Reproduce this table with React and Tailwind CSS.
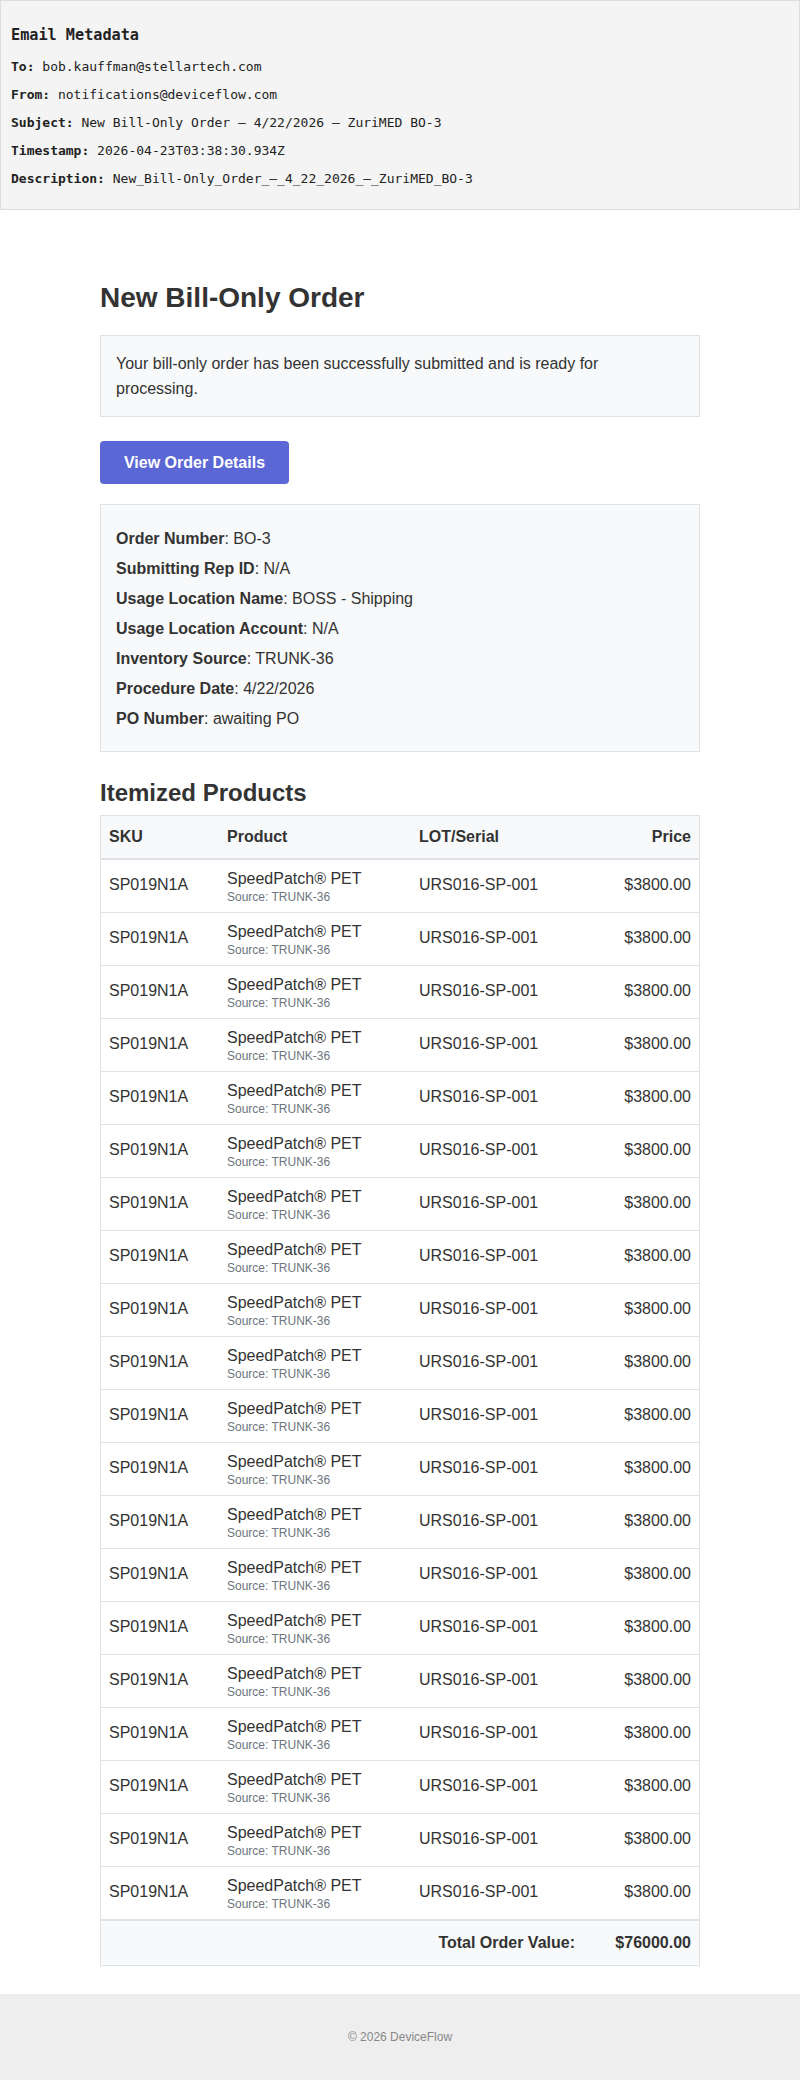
import React from "react";

const meta = [
  ["To:", "bob.kauffman@stellartech.com"],
  ["From:", "notifications@deviceflow.com"],
  ["Subject:", "New Bill-Only Order – 4/22/2026 – ZuriMED BO-3"],
  ["Timestamp:", "2026-04-23T03:38:30.934Z"],
  ["Description:", "New_Bill-Only_Order_–_4_22_2026_–_ZuriMED_BO-3"],
];

const details = [
  ["Order Number", "BO-3"],
  ["Submitting Rep ID", "N/A"],
  ["Usage Location Name", "BOSS - Shipping"],
  ["Usage Location Account", "N/A"],
  ["Inventory Source", "TRUNK-36"],
  ["Procedure Date", "4/22/2026"],
  ["PO Number", "awaiting PO"],
];

const items = Array.from({ length: 20 }, () => ({
  sku: "SP019N1A",
  name: "SpeedPatch® PET",
  source: "TRUNK-36",
  lot: "URS016-SP-001",
  price: "$3800.00",
}));

const Metadata = () => {
  return (
    <div className="border border-[#ddd] bg-[#f4f4f4] p-[10px] font-['DejaVu_Sans_Mono',monospace] text-[13px] text-[#222]">
      <h3 className="mt-[15px] mb-[15px] text-[15.2px] font-bold leading-[18px]">Email Metadata</h3>
      {meta.map(([k, v]) => (
        <p key={k} className="my-[13px] leading-[15px]">
          <strong>{k}</strong> {v}
        </p>
      ))}
    </div>
  );
};

const App = () => {
  return (
    <div className="min-h-screen bg-white font-['Liberation_Sans',Arial,sans-serif] text-[#333]">
      <Metadata />

      <div className="mx-auto w-[600px]">
        <h1 className="mt-[71px] text-[28px] font-bold leading-[34px]">New Bill-Only Order</h1>

        <div className="mt-[20px] border border-[#dee2e6] bg-[#f8f9fa] p-[15px] text-base leading-[25px]">
          Your bill-only order has been successfully submitted and is ready for processing.
        </div>

        <a className="mt-[24px] flex h-[43px] w-[189px] items-center justify-center rounded bg-[#5a67d5] text-base font-bold text-white">
          View Order Details
        </a>

        <div className="mt-[20px] flex flex-col gap-[6px] border border-[#dee2e6] bg-[#f8f9fa] px-[15px] pt-[22px] pb-[20px] text-base leading-6">
          {details.map(([k, v]) => (
            <div key={k}>
              <span className="font-bold">{k}</span>: {v}
            </div>
          ))}
        </div>

        <h2 className="mt-[26px] text-2xl font-bold leading-[29px]">Itemized Products</h2>

        <table className="mt-[8px] w-full table-fixed border-separate border-spacing-0 border border-[#dee2e6] text-base">
          <colgroup>
            <col className="w-[118px]" />
            <col className="w-[192px]" />
            <col className="w-[172px]" />
            <col className="w-[116px]" />
          </colgroup>
          <thead>
            <tr className="bg-[#f8f9fa]">
              <th className="border-b-2 border-[#dee2e6] px-2 py-2 text-left font-bold leading-[26px]">SKU</th>
              <th className="border-b-2 border-[#dee2e6] px-2 py-2 text-left font-bold leading-[26px]">Product</th>
              <th className="border-b-2 border-[#dee2e6] px-2 py-2 text-left font-bold leading-[26px]">LOT/Serial</th>
              <th className="border-b-2 border-[#dee2e6] px-2 py-2 text-right font-bold leading-[26px]">Price</th>
            </tr>
          </thead>
          <tbody>
            {items.map((it, i) => {
              const b = i === items.length - 1 ? "border-b-2" : "border-b";
              return (
                <tr key={i}>
                  <td className={`${b} border-[#dee2e6] px-2 pt-[6px] pb-[9px] align-middle`}>{it.sku}</td>
                  <td className={`${b} border-[#dee2e6] px-2 pt-[6px] pb-[9px]`}>
                    <div className="leading-[25px]">{it.name}</div>
                    <div className="text-xs leading-[12px] text-[#6c757d]">Source: {it.source}</div>
                  </td>
                  <td className={`${b} border-[#dee2e6] px-2 pt-[6px] pb-[9px] align-middle`}>{it.lot}</td>
                  <td className={`${b} border-[#dee2e6] px-2 pt-[6px] pb-[9px] text-right align-middle`}>{it.price}</td>
                </tr>
              );
            })}
            <tr className="bg-[#f8f9fa]">
              <td colSpan={3} className="px-2 py-[9px] text-right font-bold leading-[26px]">
                Total Order Value:
              </td>
              <td className="px-2 py-[9px] text-right font-bold leading-[26px]">$76000.00</td>
            </tr>
          </tbody>
        </table>
      </div>

      <div className="mt-[28px] bg-[#eeeeee] py-[34px] text-center text-xs leading-[19px] text-[#888]">
        © 2026 DeviceFlow
      </div>
    </div>
  );
};

export default App;
